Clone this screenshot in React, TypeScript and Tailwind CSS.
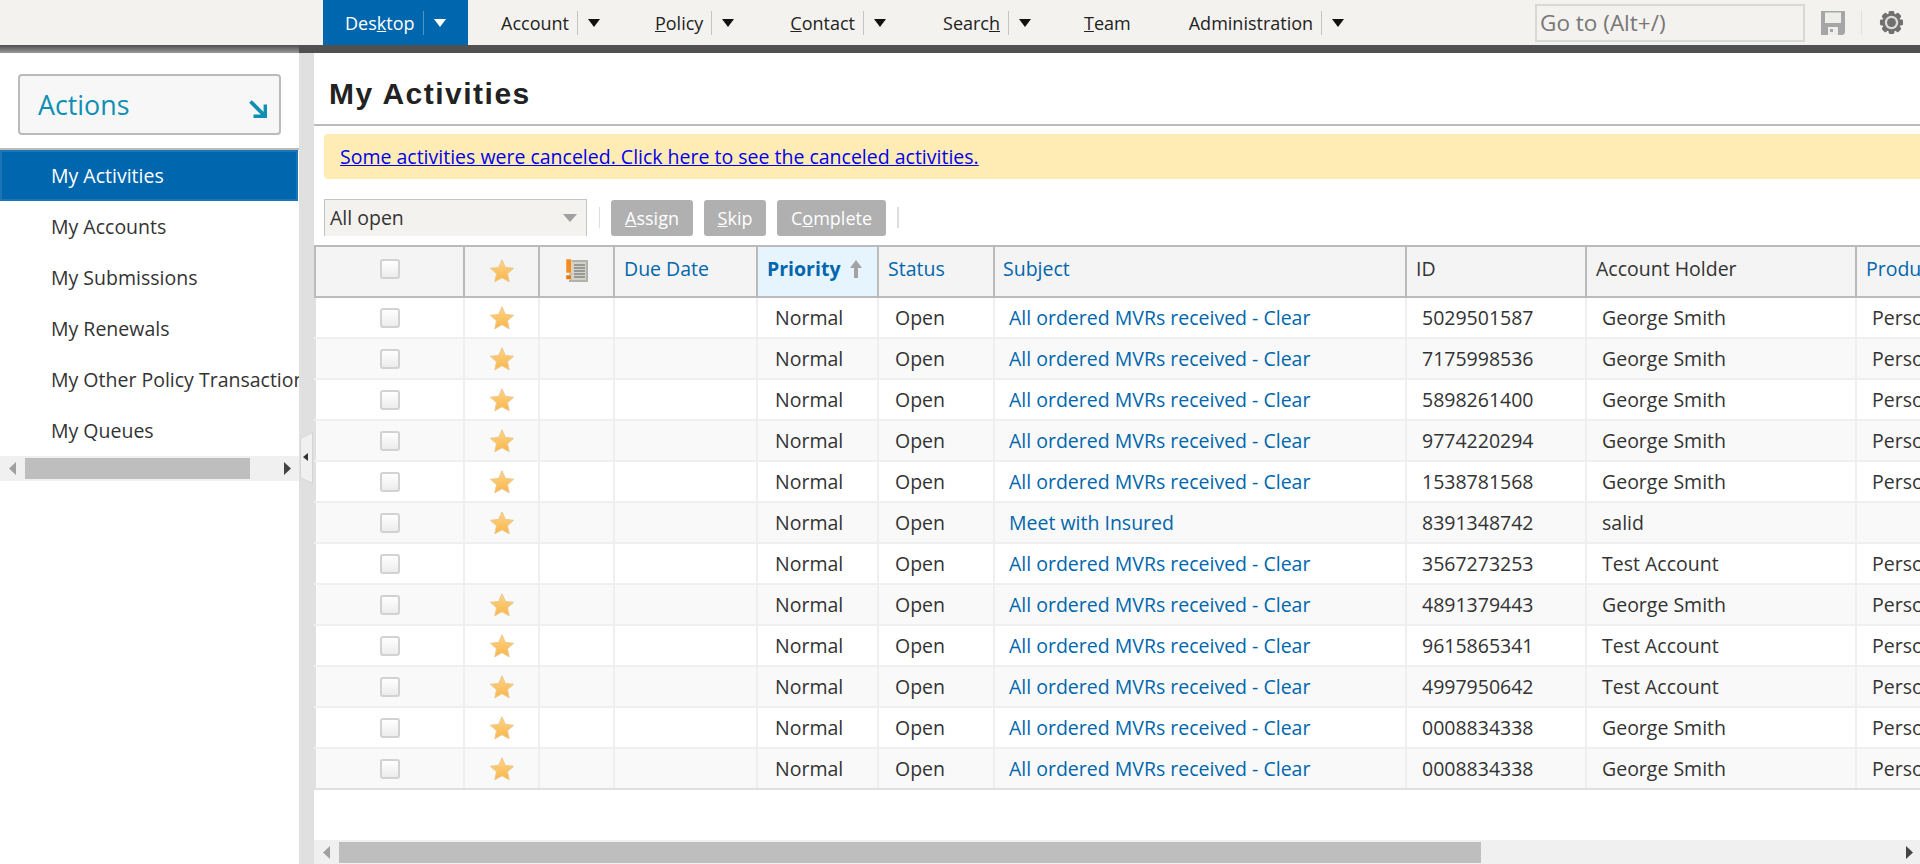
import { ReactNode } from 'react';

const colClass =
  'grid grid-cols-[149px_75px_75px_143px_121px_116px_412px_180px_270px_120px] w-[1661px]';

const rows = [
  { star: true, subject: 'All ordered MVRs received - Clear', id: '5029501587', holder: 'George Smith', product: 'Personal Auto' },
  { star: true, subject: 'All ordered MVRs received - Clear', id: '7175998536', holder: 'George Smith', product: 'Personal Auto' },
  { star: true, subject: 'All ordered MVRs received - Clear', id: '5898261400', holder: 'George Smith', product: 'Personal Auto' },
  { star: true, subject: 'All ordered MVRs received - Clear', id: '9774220294', holder: 'George Smith', product: 'Personal Auto' },
  { star: true, subject: 'All ordered MVRs received - Clear', id: '1538781568', holder: 'George Smith', product: 'Personal Auto' },
  { star: true, subject: 'Meet with Insured', id: '8391348742', holder: 'salid', product: '' },
  { star: false, subject: 'All ordered MVRs received - Clear', id: '3567273253', holder: 'Test Account', product: 'Personal Auto' },
  { star: true, subject: 'All ordered MVRs received - Clear', id: '4891379443', holder: 'George Smith', product: 'Personal Auto' },
  { star: true, subject: 'All ordered MVRs received - Clear', id: '9615865341', holder: 'Test Account', product: 'Personal Auto' },
  { star: true, subject: 'All ordered MVRs received - Clear', id: '4997950642', holder: 'Test Account', product: 'Personal Auto' },
  { star: true, subject: 'All ordered MVRs received - Clear', id: '0008834338', holder: 'George Smith', product: 'Personal Auto' },
  { star: true, subject: 'All ordered MVRs received - Clear', id: '0008834338', holder: 'George Smith', product: 'Personal Auto' },
];

function Caret({ white }: { white?: boolean }) {
  return (
    <svg width="12" height="9" viewBox="0 0 12 9" className="shrink-0">
      <path d="M0 1h12L6 9z" fill={white ? '#fff' : '#111'} />
    </svg>
  );
}

function NavItem({ children, menu, className }: { children: ReactNode; menu?: boolean; className: string }) {
  return (
    <div className={`flex items-center h-[45px] ${className}`}>
      <span className="pt-0.5">{children}</span>
      {menu && (
        <>
          <span className="w-px h-6 bg-[#c4c4c4] ml-2 mr-2.5" />
          <Caret />
        </>
      )}
    </div>
  );
}

function Star() {
  return (
    <svg width="24" height="24" viewBox="1 1 22 22">
      <defs>
        <linearGradient id="starFill" x1="0" y1="0" x2="0" y2="1">
          <stop offset="0" stopColor="#fdd587" />
          <stop offset="1" stopColor="#f9b54a" />
        </linearGradient>
      </defs>
      <path
        d="M12 1.8l3.1 6.9 7.5.8-5.6 5 1.6 7.4L12 18.2 5.4 21.9 7 14.5l-5.6-5 7.5-.8z"
        fill="url(#starFill)"
        stroke="#ecc78e"
        strokeWidth="0.9"
        strokeLinejoin="round"
      />
    </svg>
  );
}

function Checkbox() {
  return (
    <span className="block w-5 h-5 rounded-[3px] border-2 border-[#d2d2d2] bg-gradient-to-b from-white to-[#ececec]" />
  );
}

function NoteIcon() {
  return (
    <svg width="22" height="23" viewBox="0 0 22 23">
      <rect x="3" y="1" width="19" height="22" fill="#b2b2aa" />
      <rect x="6" y="3" width="14" height="18" fill="#d2d2cc" />
      <path d="M8 6h11M8 9h11M8 12h11M8 15h11M8 18h11" stroke="#86867e" strokeWidth="1.4" />
      <rect x="0" y="0" width="5.5" height="14" fill="#f28c1e" stroke="#fff" strokeWidth="0.5" />
      <rect x="0" y="16" width="5.5" height="4.5" fill="#e8740e" stroke="#fff" strokeWidth="0.5" />
    </svg>
  );
}

function Gear() {
  return (
    <svg width="25" height="25" viewBox="0 0 26 26">
      <g fill="#707070">
        <circle cx="13" cy="13" r="9.5" />
        <rect x="10" y="1" width="6" height="24" rx="1.5" />
        <rect x="10" y="1" width="6" height="24" rx="1.5" transform="rotate(45 13 13)" />
        <rect x="10" y="1" width="6" height="24" rx="1.5" transform="rotate(90 13 13)" />
        <rect x="10" y="1" width="6" height="24" rx="1.5" transform="rotate(135 13 13)" />
      </g>
      <circle cx="13" cy="13" r="7" fill="#dcdbd8" />
      <circle cx="13" cy="13" r="4.6" fill="#707070" />
    </svg>
  );
}

function Save() {
  return (
    <svg width="24" height="24" viewBox="0 0 24 24">
      <path d="M0 0h24v22l-2 2H0z" fill="#a6a6a6" />
      <rect x="4" y="1.5" width="16" height="10.5" fill="#eeeeea" />
      <rect x="7" y="16" width="10" height="8" fill="#eeeeea" />
      <rect x="9" y="18" width="3" height="3" fill="#a6a6a6" />
    </svg>
  );
}

function ActionButton({ first, rest, className }: { first: ReactNode; rest: string; className: string }) {
  return (
    <button className={`h-9 pt-0.5 rounded-[3px] bg-[#b0b0b0] text-white text-[18px] ${className}`}>
      {first}
      {rest}
    </button>
  );
}

function HScrollArrow({ dir, color }: { dir: 'l' | 'r'; color: string }) {
  return (
    <svg width="7" height="13" viewBox="0 0 7 13" className="shrink-0">
      <path d={dir === 'l' ? 'M7 0v13L0 6.5z' : 'M0 0v13l7-6.5z'} fill={color} />
    </svg>
  );
}

export default function App() {
  return (
    <div className="h-[864px] w-[1920px] overflow-hidden flex flex-col bg-white text-[#333] font-['Open_Sans',sans-serif] text-[19.5px]">
      {/* Top nav */}
      <header className="h-[45px] shrink-0 bg-[#f3f2ee] flex items-center text-[#222] text-[18px]">
        <div className="w-[145px] h-[45px] ml-[323px] bg-[#0066ad] text-white flex items-center pl-[22px]">
          <span className="pt-0.5">
            Des<u>k</u>top
          </span>
          <span className="w-px h-6 bg-[#4f94c6] ml-[9px] mr-2.5" />
          <Caret white />
        </div>
        <NavItem menu className="ml-[33px]">Account</NavItem>
        <NavItem menu className="ml-[55px]"><u>P</u>olicy</NavItem>
        <NavItem menu className="ml-[56px]"><u>C</u>ontact</NavItem>
        <NavItem menu className="ml-[57px]">Searc<u>h</u></NavItem>
        <NavItem className="ml-[53px]"><u>T</u>eam</NavItem>
        <NavItem menu className="ml-[58px]">Administration</NavItem>
        <div className="ml-[191px] w-[270px] h-[38px] border-2 border-[#d8d8d4] text-[#777] pl-[3px] flex items-center text-[22.5px]">
          Go to (Alt+/)
        </div>
        <div className="ml-4"><Save /></div>
        <span className="w-px h-6 bg-[#dedede] ml-4" />
        <div className="ml-[17px]"><Gear /></div>
      </header>
      <div className="h-2 shrink-0 flex">
        <div className="w-[299px] bg-gradient-to-b from-[#505050] to-[#9a9a9a]" />
        <div className="flex-1 bg-[#505050]" />
      </div>

      <div className="flex-1 flex min-h-0">
        {/* Sidebar */}
        <aside className="w-[299px] shrink-0 flex flex-col">
          <div className="pt-[21px] pb-[13px] pl-[18px] pr-[18px]">
            <div className="h-[61px] border-2 border-[#bbb] rounded-[4px] bg-[#f7f7f7] flex items-center justify-between pl-[18px] pr-3 text-[#0f8fb3] text-[26.8px]">
              <span className="pt-0.5">Actions</span>
              <svg width="18" height="18" viewBox="0 0 18 18" className="mt-2">
                <path d="M1.5 1.5l13 13M16.5 4.5v12H4.5" stroke="#0f8fb3" strokeWidth="3.8" fill="none" />
              </svg>
            </div>
          </div>
          <nav className="border-t-2 border-[#bbb]">
            <div className="h-[51px] bg-[#0066ad] border-2 border-[#1d75b5] text-white flex items-center pl-[49px] mr-px">
              My Activities
            </div>
            {['My Accounts', 'My Submissions', 'My Renewals', 'My Other Policy Transactions', 'My Queues'].map((item) => (
              <div key={item} className="h-[51px] flex items-center pl-[51px] whitespace-nowrap overflow-hidden">
                {item}
              </div>
            ))}
          </nav>
          <div className="h-[25px] bg-[#f0f0f0] flex items-center">
            <div className="w-[25px] flex justify-center"><HScrollArrow dir="l" color="#a0a0a0" /></div>
            <div className="w-[225px] h-[21px] bg-[#bebebe]" />
            <div className="ml-[34px]"><HScrollArrow dir="r" color="#444" /></div>
          </div>
        </aside>

        {/* Splitter */}
        <div className="w-[15px] shrink-0 bg-[#e0e0e0] relative">
          <svg width="13" height="52" viewBox="0 0 13 52" className="absolute left-px top-[379px]">
            <path d="M.5 6.5l12-6v51l-12-6z" fill="#f0f0f0" stroke="#d4d4d4" />
            <path d="M8 21v8l-5-4z" fill="#333" />
          </svg>
        </div>

        {/* Main */}
        <main className="flex-1 min-w-0 flex flex-col overflow-hidden">
          <div className="h-[73px] shrink-0 border-b-2 border-[#bbb] flex items-center pl-[15px] pt-[10px]">
            <h1 className="font-['Liberation_Sans',sans-serif] font-bold text-[30px] tracking-[1.5px] text-[#222]">
              My Activities
            </h1>
          </div>
          <div className="mt-2 ml-[10px] h-[45px] shrink-0 bg-[#feecb4] rounded-l-[4px] flex items-center pl-4">
            <a href="#" className="text-[#0000ee] underline">
              Some activities were canceled. Click here to see the canceled activities.
            </a>
          </div>
          <div className="mt-5 ml-[10px] h-[37px] shrink-0 flex items-center">
            <div className="w-[263px] h-[37px] bg-[#f3f2ee] border border-b-0 border-[#c4c4c4] flex items-center justify-between pl-[5px] pr-[9px]">
              <span>All open</span>
              <svg width="14" height="8" viewBox="0 0 14 8">
                <path d="M0 0h14L7 8z" fill="#a0a0a0" />
              </svg>
            </div>
            <span className="w-px h-[21px] bg-[#ddd] ml-3" />
            <ActionButton className="ml-[11px] w-[82px]" first={<u>A</u>} rest="ssign" />
            <ActionButton className="ml-[11px] w-[62px]" first={<u>S</u>} rest="kip" />
            <ActionButton
              className="ml-[11px] w-[109px]"
              first={<>C<u>o</u></>}
              rest="mplete"
            />
            <span className="w-0.5 h-[21px] bg-[#ddd] ml-[11px]" />
          </div>

          {/* Grid */}
          <div className="mt-[9px] flex-1 min-h-0 overflow-hidden">
            <div className={`${colClass} h-[53px] bg-[#f4f4f4] border-y-2 border-[#bbb] items-stretch`}>
              <div className="border-l-2 border-[#bbb] flex items-center justify-center pb-[5px]"><Checkbox /></div>
              <div className="border-l-2 border-[#bbb] flex items-center justify-center pb-[2px]"><Star /></div>
              <div className="border-l-2 border-[#bbb] flex items-center justify-center pb-[3px]"><NoteIcon /></div>
              <div className="border-l-2 border-[#bbb] flex items-center pl-[9px] pb-1.5 text-[#0066ad]">Due Date</div>
              <div className="border-l-2 border-[#bbb] flex items-center pl-[9px] pb-1.5 bg-[#e6f4fd] text-[#0066ad] font-bold">
                Priority
                <svg width="14" height="18" viewBox="0 0 14 18" className="ml-2">
                  <path d="M7 0l6 8H9v10H5V8H1z" fill="#a3a3a3" />
                </svg>
              </div>
              <div className="border-l-2 border-[#bbb] flex items-center pl-[9px] pb-1.5 text-[#0066ad]">Status</div>
              <div className="border-l-2 border-[#bbb] flex items-center pl-[8px] pb-1.5 text-[#0066ad]">Subject</div>
              <div className="border-l-2 border-[#bbb] flex items-center pl-[9px] pb-1.5">ID</div>
              <div className="border-l-2 border-[#bbb] flex items-center pl-[9px] pb-1.5">Account Holder</div>
              <div className="border-l-2 border-[#bbb] flex items-center pl-[9px] pb-1.5 text-[#0066ad]">Product</div>
            </div>
            {rows.map((row, i) => (
              <div
                key={i}
                className={`${colClass} h-[41px] border-b-2 ${i === rows.length - 1 ? 'border-[#e0e0e0]' : 'border-[#efefef]'} ${i % 2 === 1 ? 'bg-[#f9f9f9]' : 'bg-white'}`}
              >
                <div className="border-l-2 border-[#e0e0e0] flex items-center justify-center"><Checkbox /></div>
                <div className="border-l-2 border-[#efefef] flex items-center justify-center">
                  {row.star && <Star />}
                </div>
                <div className="border-l-2 border-[#efefef]" />
                <div className="border-l-2 border-[#efefef]" />
                <div className="border-l-2 border-[#efefef] flex items-center pl-[17px]">Normal</div>
                <div className="border-l-2 border-[#efefef] flex items-center pl-[16px]">Open</div>
                <div className="border-l-2 border-[#efefef] flex items-center pl-[14px] text-[#0066ad]">{row.subject}</div>
                <div className="border-l-2 border-[#efefef] flex items-center pl-[15px]">{row.id}</div>
                <div className="border-l-2 border-[#efefef] flex items-center pl-[15px]">{row.holder}</div>
                <div className="border-l-2 border-[#efefef] flex items-center pl-[15px] whitespace-nowrap">{row.product}</div>
              </div>
            ))}
          </div>

          {/* Bottom scrollbar */}
          <div className="h-6 shrink-0 bg-[#f0f0f0] flex items-center">
            <div className="w-[25px] flex justify-center"><HScrollArrow dir="l" color="#a0a0a0" /></div>
            <div className="w-[1142px] h-[21px] bg-[#bebebe]" />
            <div className="ml-[425px]"><HScrollArrow dir="r" color="#444" /></div>
          </div>
        </main>
      </div>
    </div>
  );
}
